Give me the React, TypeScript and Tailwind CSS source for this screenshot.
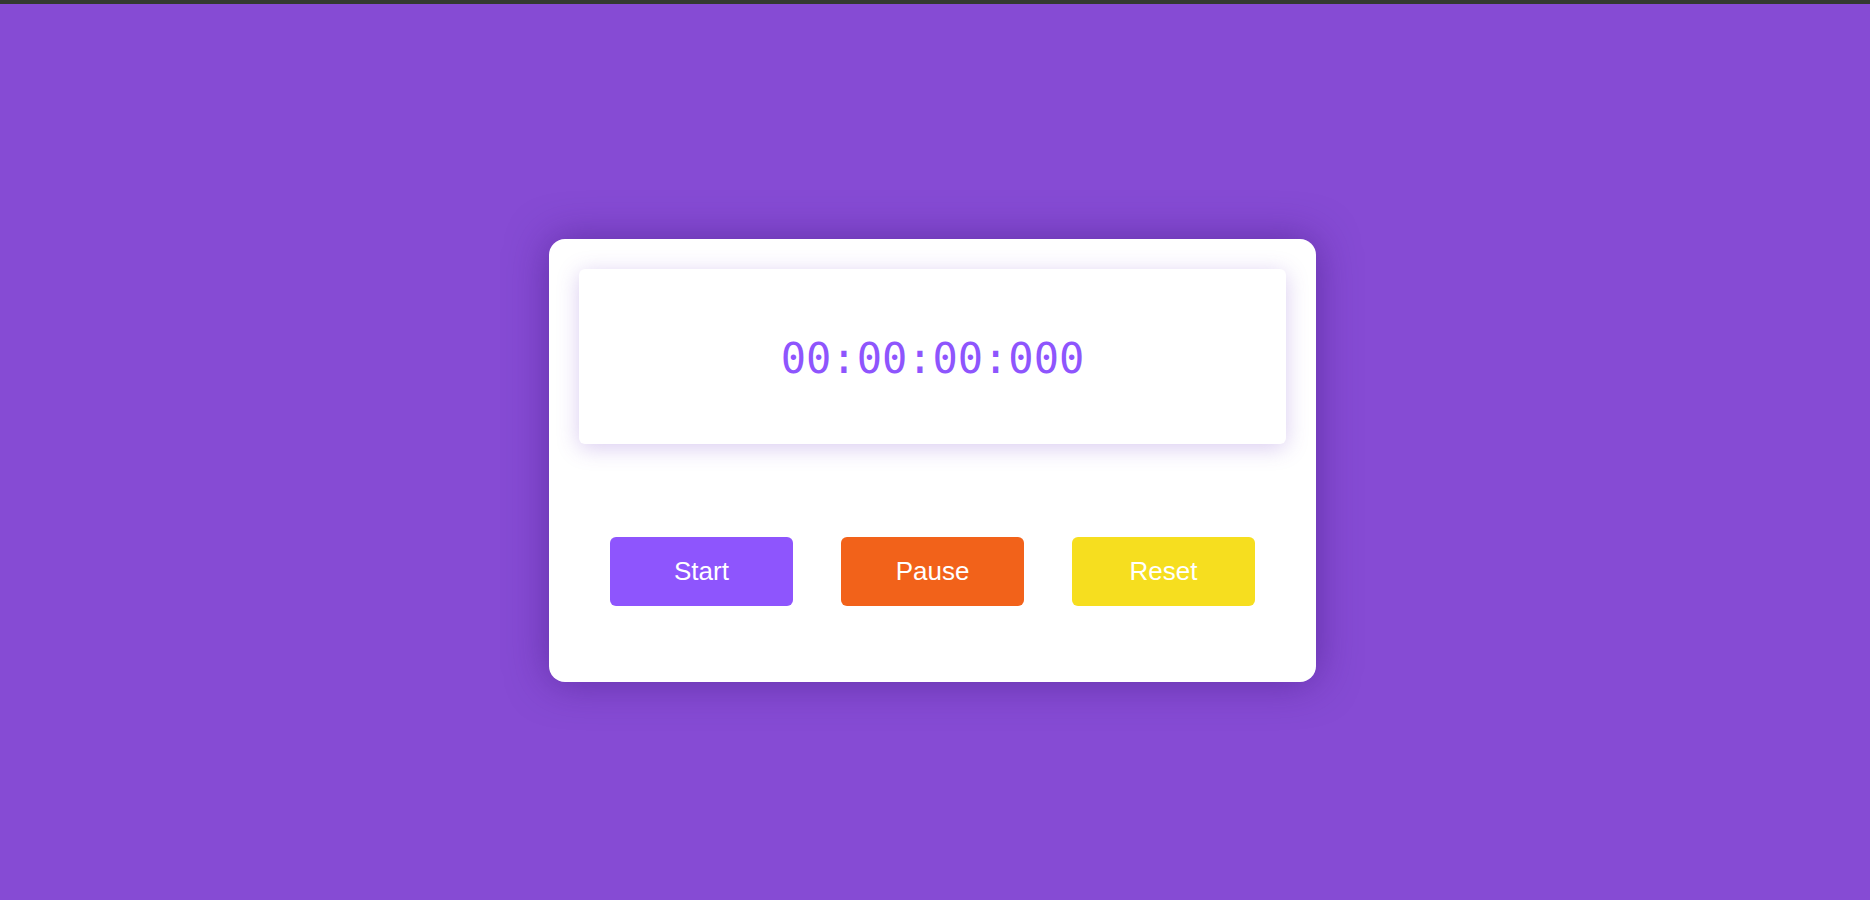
import React from "react";

const Stopwatch = () => {
  return (
    <div className="min-h-screen w-full bg-[#864bd4]">
      <div className="h-[4px] w-full bg-[#343a31]" />
      <div className="flex justify-center pt-[235px] pr-[5px]">
        <div className="w-[767px] h-[443px] rounded-[16px] bg-white p-[30px] shadow-[0_0_40px_rgba(60,20,120,0.5)]">
          <div className="flex h-[175px] items-center justify-center rounded-[6px] bg-white shadow-[0_4px_22px_rgba(120,70,200,0.28)]">
            <span className="pt-[4px] font-['DejaVu_Sans_Mono',monospace] text-[42px] text-[#8e55fd]">
              00:00:00:000
            </span>
          </div>
          <div className="mt-[93px] flex justify-center gap-[48px]">
            <button className="h-[69px] w-[183px] rounded-[6px] bg-[#8e55fd] font-['Liberation_Sans',Arial,sans-serif] text-[26px] text-white">
              Start
            </button>
            <button className="h-[69px] w-[183px] rounded-[6px] bg-[#f2621a] font-['Liberation_Sans',Arial,sans-serif] text-[26px] text-white">
              Pause
            </button>
            <button className="h-[69px] w-[183px] rounded-[6px] bg-[#f6de1f] font-['Liberation_Sans',Arial,sans-serif] text-[26px] text-white">
              Reset
            </button>
          </div>
        </div>
      </div>
    </div>
  );
};

export default function App() {
  return <Stopwatch />;
}
